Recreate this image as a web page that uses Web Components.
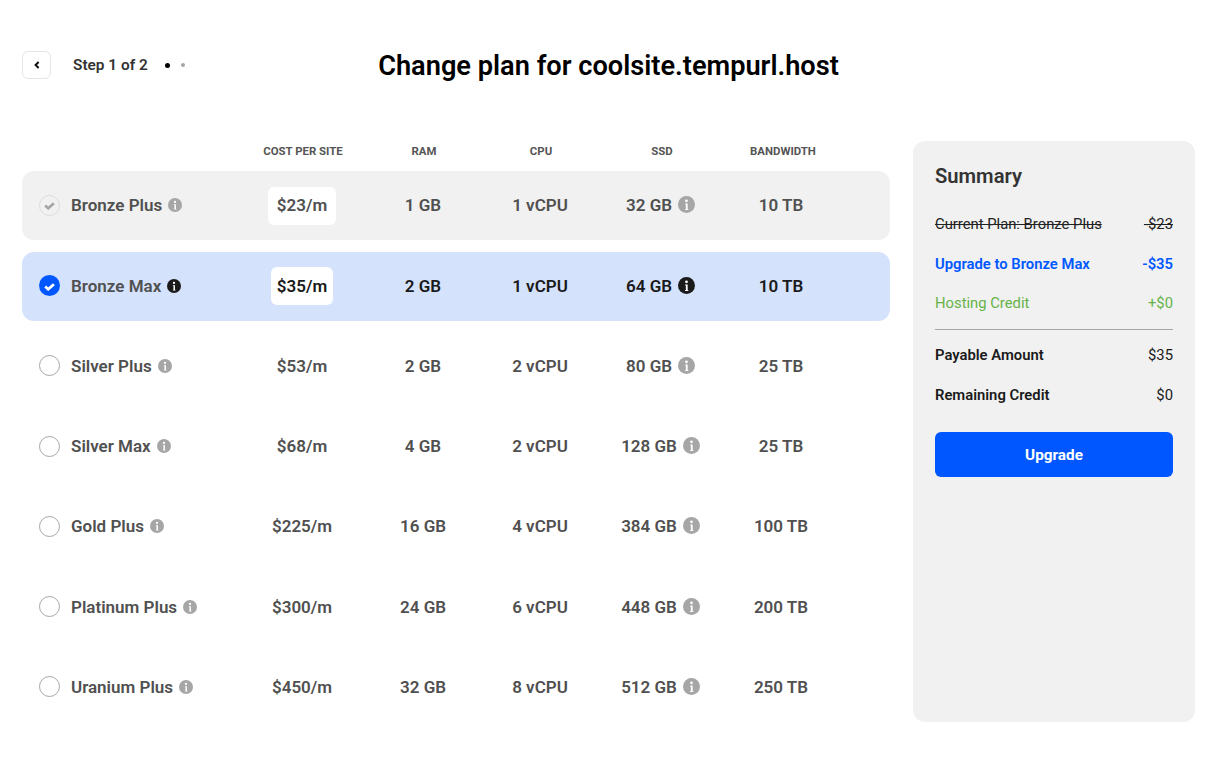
<!DOCTYPE html>
<html lang="en"><head><meta charset="utf-8"><title>Change plan</title>
<style>
html,body{margin:0;padding:0;background:#fff;font-family:Roboto,"Liberation Sans",sans-serif}
</style></head><body>
<plan-app></plan-app>
<script>
const def=(name,html,init)=>{customElements.define(name,class extends HTMLElement{
  connectedCallback(){ if(this.shadowRoot) return; const r=this.attachShadow({mode:'open'}); r.innerHTML=typeof html==='function'?html(this):html; }
});};
def('info-icon',h=>{const s=h.getAttribute('size')||14;const lift=h.getAttribute('lift')||0;return `<style>:host{display:inline-flex;flex:none;color:var(--info,#a6a6a6);margin-top:${-lift}px}svg{display:block}</style>
<svg width="${s}" height="${s}" viewBox="0 0 16 16"><circle cx="8" cy="8" r="8" fill="currentColor"/><circle cx="8" cy="4.5" r="1.3" fill="#fff"/><path d="M6.7 7h2.4v5.2h.6v1H6.7v-1h.7V8h-.7z" fill="#fff"/></svg>`});
def('plan-radio',h=>{const st=h.getAttribute('state')||'off';
 const box={off:'border:1.3px solid #a6a6a6;background:#fff',current:'border:1px solid #dcdcdc;background:transparent',on:'background:#0057ff'}[st];
 const c={current:'#a6a6a6',on:'#fff'}[st];
 return `<style>:host{display:block;width:21px;height:21px;flex:none}div{box-sizing:border-box;width:21px;height:21px;border-radius:50%;${box};display:flex;align-items:center;justify-content:center}svg{display:block;margin-top:1px}</style>
 <div>${c?`<svg width="11" height="9" viewBox="0 0 11 9"><path d="M1.2 4.6l3 2.7L9.9 2.2" fill="none" stroke="${c}" stroke-width="2.7"/></svg>`:''}</div>`});
const GRID='display:grid;grid-template-columns:220px 120px 122px 112px 129px 112px 53px;';
def('table-head',`<style>:host{display:block}
.g{${GRID}font:700 11.4px/12px Roboto,sans-serif;color:#555;text-transform:uppercase;text-align:center;padding:0 0 14.4px}
span{display:block;padding-left:2px;white-space:nowrap}</style>
<div class="g"><i></i><span>Cost per site</span><span>RAM</span><span>CPU</span><span style="padding-left:3px">SSD</span><span style="padding-left:4px">Bandwidth</span></div>`);
def('plan-row',h=>{const a=n=>h.getAttribute(n);const st=a('state')||'off';
 const bg={off:'transparent',current:'#f1f1f1',on:'#d4e2fc'}[st];
 const col=st==='on'?'#1a1a1a':'#505050';
 const pill=st==='off'?'':'background:#fff;border-radius:6px;height:38px;box-sizing:border-box;display:flex;align-items:center;margin-top:1px;padding:0 '+(st==='on'?'5.5px':'8.5px')+' 1px;';
 return `<style>:host{display:block}
 .g{${GRID}height:69px;box-sizing:border-box;padding-bottom:.9px;align-items:center;background:${bg};border-radius:12px;text-align:center;font:600 17px/20px Roboto,sans-serif;color:${col};--info:${st==='on'?'#1a1a1a':'#a6a6a6'}}
 .n{display:flex;align-items:center;padding-left:17px;color:#505050;text-align:left;gap:11px}
 .n b{font-weight:600;display:flex;align-items:center;gap:6px;white-space:nowrap}
 .s{display:flex;align-items:center;justify-content:center;gap:6px}
 .c{display:flex;justify-content:center}
 .p{${pill}}
 </style><div class="g">
 <div class="n"><plan-radio state="${st}"></plan-radio><b>${a('name')}<info-icon size="14"></info-icon></b></div>
 <div class="c"><span class="p">${a('cost')}</span></div><div>${a('ram')}</div><div>${a('cpu')}</div>
 <div class="s">${a('ssd')}<info-icon size="17" lift="1"></info-icon></div><div>${a('bw')}</div><i></i></div>`});
def('plan-table',`<style>:host{display:flex;flex-direction:column;width:868px;padding-top:4px;flex:none}.r{display:flex;flex-direction:column;gap:11.25px}</style>
<table-head></table-head><div class="r"><slot></slot></div>`);
def('sum-line',h=>{const t=h.getAttribute('kind')||'';const s={strike:'color:#222;font-weight:400;text-decoration:line-through',blue:'color:#0057ff;font-weight:600',green:'color:#66b34a;font-weight:400',total:'color:#1a1a1a;font-weight:600'}[t];
 return `<style>:host{display:flex;justify-content:space-between;font-family:Roboto,sans-serif;font-size:14.8px;line-height:20px;${s}}
 .v{${t==='total'?'font-weight:400':''}}</style><span>${h.getAttribute('label')}</span><span class="v">${h.getAttribute('value')}</span>`});
def('summary-panel',`<style>:host{display:block;box-sizing:border-box;width:282px;height:581px;background:#f1f1f1;border-radius:12px;padding:23px 22px;flex:none}
h2{margin:0 0 26px;font:600 20.2px/24px Roboto,sans-serif;color:#333}
.a{display:flex;flex-direction:column;gap:19.5px}
hr{border:0;border-top:1px solid #a6a6a6;margin:16px 0 15px}
.b{display:flex;flex-direction:column;gap:20px}
button{display:block;width:100%;height:45px;margin-top:27px;border:0;border-radius:6px;background:#0057ff;color:#fff;font:700 15.3px/20px Roboto,sans-serif}
</style><h2>Summary</h2>
<div class="a"><sum-line kind="strike" label="Current Plan: Bronze Plus" value="-$23"></sum-line>
<sum-line kind="blue" label="Upgrade to Bronze Max" value="-$35"></sum-line>
<sum-line kind="green" label="Hosting Credit" value="+$0"></sum-line></div><hr>
<div class="b"><sum-line kind="total" label="Payable Amount" value="$35"></sum-line>
<sum-line kind="total" label="Remaining Credit" value="$0"></sum-line></div>
<button>Upgrade</button>`);
def('plan-header',`<style>:host{display:grid;grid-template-columns:1fr auto 1fr;grid-template-rows:28px;align-items:center;height:28px}
.l{display:flex;align-items:center}
.back{box-sizing:border-box;width:29px;height:28px;border:1px solid #e5e5e5;border-radius:6px;background:#fff;display:flex;align-items:center;justify-content:center;margin-right:22px}
.st{font:600 15.4px/20px Roboto,sans-serif;color:#333;margin-right:17px}
.d{width:5px;height:5px;border-radius:50%;background:#000;margin-right:11px}
.d.g{width:4px;height:4px;background:#a6a6a6}
h1{margin:0;padding-top:1px;font:600 27.2px/28px Roboto,sans-serif;color:#000}
</style><div class="l"><div class="back"><svg width="8" height="10" viewBox="0 0 8 10"><path d="M5.6 2 2.6 5l3 3" fill="none" stroke="#111" stroke-width="2"/></svg></div>
<span class="st">Step 1 of 2</span><i class="d"></i><i class="d g"></i></div>
<h1>Change plan for coolsite.tempurl.host</h1><div></div>`);
def('plan-app',`<style>:host{display:block;box-sizing:border-box;width:1220px;height:766px;padding:51px 25px 0 22px}
.m{display:flex;justify-content:space-between;margin-top:62px;align-items:flex-start}
</style><plan-header></plan-header><div class="m"><plan-table>
<plan-row state="current" name="Bronze Plus" cost="$23/m" ram="1 GB" cpu="1 vCPU" ssd="32 GB" bw="10 TB"></plan-row>
<plan-row state="on" name="Bronze Max" cost="$35/m" ram="2 GB" cpu="1 vCPU" ssd="64 GB" bw="10 TB"></plan-row>
<plan-row name="Silver Plus" cost="$53/m" ram="2 GB" cpu="2 vCPU" ssd="80 GB" bw="25 TB"></plan-row>
<plan-row name="Silver Max" cost="$68/m" ram="4 GB" cpu="2 vCPU" ssd="128 GB" bw="25 TB"></plan-row>
<plan-row name="Gold Plus" cost="$225/m" ram="16 GB" cpu="4 vCPU" ssd="384 GB" bw="100 TB"></plan-row>
<plan-row name="Platinum Plus" cost="$300/m" ram="24 GB" cpu="6 vCPU" ssd="448 GB" bw="200 TB"></plan-row>
<plan-row name="Uranium Plus" cost="$450/m" ram="32 GB" cpu="8 vCPU" ssd="512 GB" bw="250 TB"></plan-row>
</plan-table><summary-panel></summary-panel></div>`);
</script>
</body></html>
